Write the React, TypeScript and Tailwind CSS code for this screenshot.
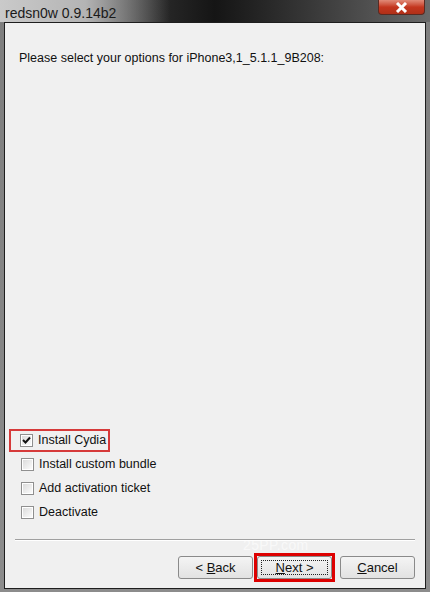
import React from "react"

const font = { fontFamily: '"Liberation Sans", Arial, sans-serif' }

function Box({ checked }: { checked?: boolean }) {
  return (
    <div className="w-[13px] h-[13px] border border-[#8f8f8f] bg-white flex items-center justify-center shrink-0">
      <div className="w-[9px] h-[9px] bg-gradient-to-br from-[#dcdcdc] to-[#fbfbfb] flex items-center justify-center">
        {checked && (
          <svg width="9" height="9" viewBox="0 0 9 9">
            <path d="M1 4 L3.5 6.5 L8 1.5" stroke="#111" strokeWidth="2" fill="none" />
          </svg>
        )}
      </div>
    </div>
  )
}

function Btn({ label, u, rest, focus }: { label?: string; u: string; rest: string; focus?: boolean }) {
  return (
    <div className="relative w-[75px] h-[23px] rounded-[3px] border border-[#8a8a8a] bg-gradient-to-b from-[#f4f4f4] to-[#e2e2e2] flex items-center justify-center text-[13px] text-[#111]">
      {focus && <div className="absolute inset-[3px] border border-dotted border-[#222]" />}
      <span className="whitespace-nowrap">
        {label}
        <span className="underline">{u}</span>
        {rest}
      </span>
    </div>
  )
}

export default function App() {
  const options = ["Install custom bundle", "Add activation ticket", "Deactivate"]

  return (
    <div
      className="w-[430px] h-[592px] flex flex-col bg-gradient-to-b from-[#7e7e7e] to-[#8c8c8c] overflow-hidden"
      style={font}
    >
      {/* title bar */}
      <div className="relative h-[22px] shrink-0 bg-gradient-to-r from-[#6a6a6a] via-[#151515] to-[#6a6a6a]">
        <div className="absolute left-0 top-0 w-[170px] h-[22px] bg-gradient-to-r from-[#cacaca] via-[#b4b4b4] to-transparent" />
        <div className="relative pl-[5px] pt-[3px] text-[14px] text-[#1a1a1a]">redsn0w 0.9.14b2</div>
        <div className="absolute right-[5px] top-0 w-[47px] h-[15px] rounded-b-[4px] border border-t-0 border-[#5a2a22] bg-gradient-to-b from-[#e08a78] via-[#c4361f] to-[#b03018] flex items-center justify-center">
          <svg width="13" height="11" viewBox="0 0 13 11">
            <path d="M2 1 L11 10 M11 1 L2 10" stroke="#fff" strokeWidth="3" />
          </svg>
        </div>
      </div>

      {/* client area */}
      <div className="relative flex-1 mx-[4px] mb-[3px] border border-[#1e1e1e] bg-[#f0f0f0] flex flex-col text-[12.5px] text-[#111]">
        <div className="pl-[14px] pt-[26px] whitespace-nowrap">Please select your options for iPhone3,1_5.1.1_9B208:</div>

        <div className="flex-1" />

        <div className="flex flex-col">
          <div className="ml-[4px] w-[101px] h-[23px] bg-[#d63a3a] p-[2px]">
            <div className="h-full bg-[#f0f0f0] flex items-center gap-[5px] pl-[9px] whitespace-nowrap">
              <Box checked />
              <span>Install Cydia</span>
            </div>
          </div>
          {options.map((o) => (
            <div key={o} className="h-[24px] flex items-center gap-[5px] pl-[16px] whitespace-nowrap">
              <Box />
              <span>{o}</span>
            </div>
          ))}
        </div>

        <div className="mt-[15px] mx-[10px] h-[2px] border-t border-[#a0a0a0] border-b border-b-white" />

        <div className="flex justify-end gap-[4px] pr-[10px] pt-[15px] pb-[9px]">
          <Btn label="< " u="B" rest="ack" />
          <div className="relative">
            <Btn u="N" rest="ext >" focus />
            <div className="absolute -inset-[3px] border-[3px] border-[#dd0000]" />
          </div>
          <div className="ml-[4px]">
            <Btn u="C" rest="ancel" />
          </div>
        </div>

        <div className="absolute left-[238px] top-[514px] text-[14px] leading-[16px] text-white/60 tracking-wide">25PP.com</div>
      </div>
    </div>
  )
}
